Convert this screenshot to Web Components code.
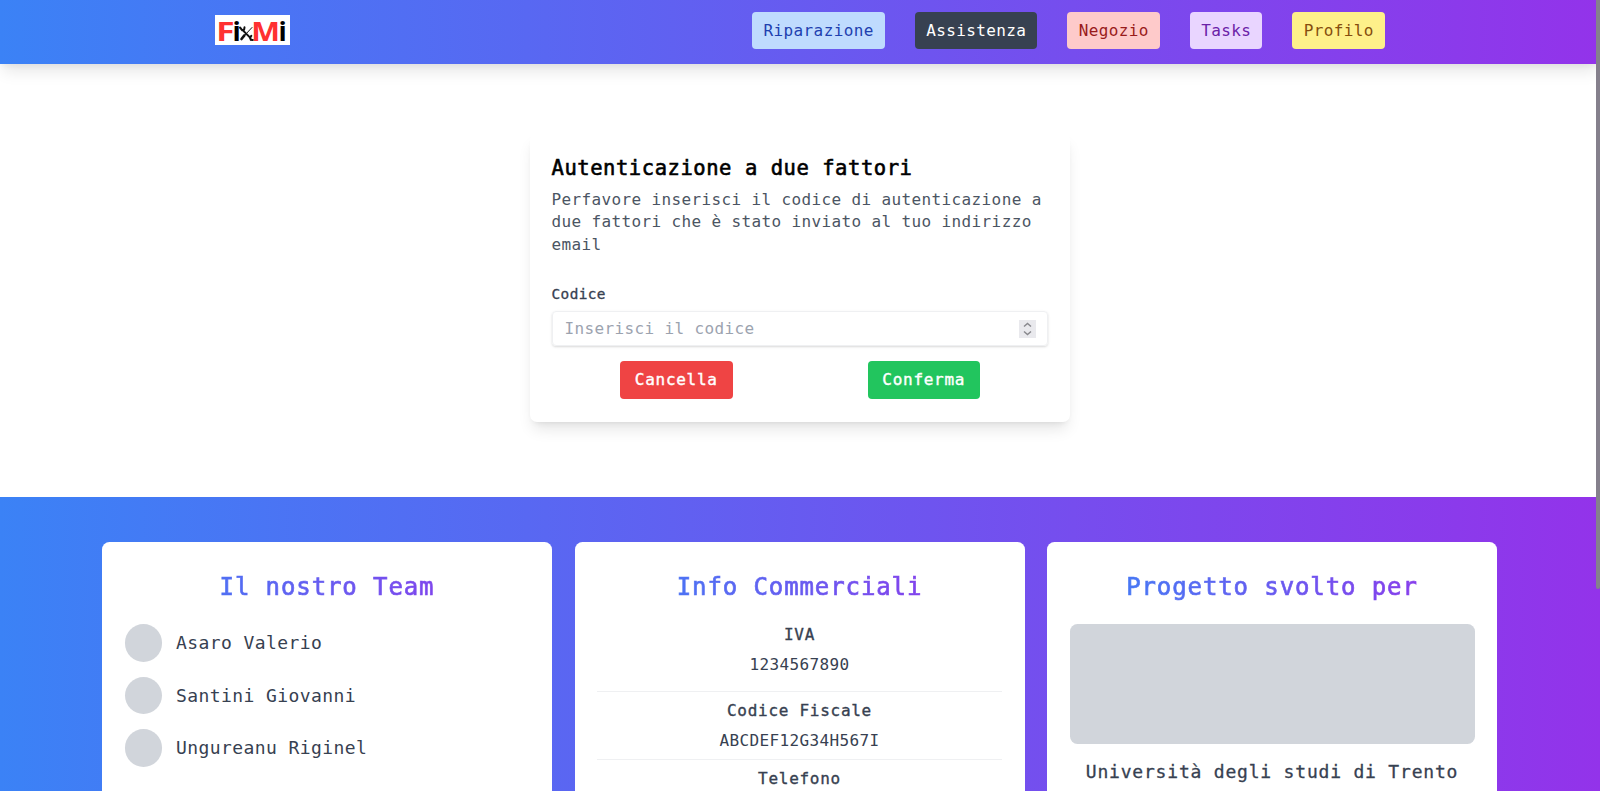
<!DOCTYPE html>
<html lang="it">
<head>
<meta charset="utf-8">
<title>FixMi</title>
<style>
html,body{margin:0;height:100%;overflow:hidden;background:#fff}
body{font:16px/22.5px "DejaVu Sans Mono","Liberation Mono",monospace;letter-spacing:.37px;color:#374151}
</style>
</head>
<body>
<fixmi-app></fixmi-app>
<script>
function define(name, markup) {
  const t = document.createElement('template');
  t.innerHTML = markup;
  customElements.define(name, class extends HTMLElement {
    constructor() {
      super();
      this.attachShadow({mode: 'open'}).append(t.content.cloneNode(true));
    }
  });
}
const GRADIENT = 'linear-gradient(to right,#3b82f6,#9333ea)';

define('fixmi-logo', `
<style>:host{display:block;width:74.5px;height:30px;background:#fff}svg{display:block;overflow:visible}text{font:700 27px "Open Sans","Noto Sans",sans-serif;letter-spacing:0}</style>
<svg width="74" height="30" viewBox="0 0 74 30">
  <g fill="#ff3131"><text x="1.2" y="26" textLength="18.3" lengthAdjust="spacingAndGlyphs">F</text><text x="36.2" y="26" textLength="28.8" lengthAdjust="spacingAndGlyphs">M</text></g>
  <text x="17.5" y="26">i</text><text x="63.6" y="26">i</text>
  <g stroke="#111" fill="none" stroke-linecap="round">
    <path stroke-width="1.8" d="M28 15.5L35.5 23"/><path stroke-width="2" d="M25 12.5l2.1 2.6 2-.5.4-2.3M36.3 20.8l-1.3 1.7.8 2.3 2 .2"/>
    <path stroke-width="1" d="M37 12.5L30 20"/><path stroke-width="2.6" d="M29.4 20.4L26.5 24"/>
  </g>
</svg>`);

define('nav-button', `
<style>:host{display:flex;align-items:center;height:37.5px;padding:1px 11.25px 0;border-radius:4px;box-sizing:border-box;background:var(--bg);color:var(--fg)}</style><slot></slot>`);

define('nav-bar', `
<style>
:host{display:flex;justify-content:space-between;align-items:center;height:64px;box-sizing:border-box;padding:0 215px;padding-bottom:3.5px;background:${GRADIENT};box-shadow:0 10px 15px -3px rgba(0,0,0,.1),0 4px 6px -2px rgba(0,0,0,.05);position:relative}
nav{display:flex;gap:30px}
</style>
<fixmi-logo></fixmi-logo>
<nav>
<nav-button style="--bg:#bfdbfe;--fg:#1e40af">Riparazione</nav-button>
<nav-button style="--bg:#374151;--fg:#fff">Assistenza</nav-button>
<nav-button style="--bg:#fecaca;--fg:#991b1b">Negozio</nav-button>
<nav-button style="--bg:#e9d5ff;--fg:#6b21a8">Tasks</nav-button>
<nav-button style="--bg:#fef08a;--fg:#854d0e">Profilo</nav-button>
</nav>`);

define('action-button', `
<style>:host{display:flex;align-items:center;justify-content:center;width:112.5px;height:37.5px;border-radius:4px;background:var(--bg);color:#fff;letter-spacing:.72px;-webkit-text-stroke:.4px currentColor}</style><slot></slot>`);

define('code-field', `
<style>
:host{display:flex;justify-content:space-between;align-items:center;height:35.5px;box-sizing:border-box;margin-left:-.5px;padding:1px 11px 0 11.5px;border:1px solid #eff0f2;border-radius:4px;box-shadow:0 1px 3px rgba(0,0,0,.1),0 1px 2px rgba(0,0,0,.06);color:#9ca3af}
svg{display:block;background:#e9e9ed}
</style>
<slot></slot>
<svg width="17" height="18" viewBox="0 0 17 18" fill="none" stroke="#88888d" stroke-width="1.4"><path d="M5 6.5L8.5 3.4 12 6.5M5 11.5l3.5 3.1 3.5-3.1"/></svg>`);

define('auth-card', `
<style>
:host{display:block;width:540px;box-sizing:border-box;margin:0 auto;padding:22.5px 22.5px 23px;border-radius:7px;background:#fff;box-shadow:0 10px 15px -3px rgba(0,0,0,.1),0 4px 6px -4px rgba(0,0,0,.1)}
h2{margin:0 0 7.8px -1px;font-size:20.5px;line-height:26px;font-weight:400;letter-spacing:.55px;color:#000;-webkit-text-stroke:.6px #000}
p{margin:0 -5px 29.2px -1px;color:#4b5563}
label{display:block;margin:0 0 6.5px -1px;font-size:14.4px;line-height:19px;letter-spacing:.4px;-webkit-text-stroke:.3px currentColor}
.row{display:grid;grid-template-columns:1fr 1fr;justify-items:center;margin-top:15px}
</style>
<h2>Autenticazione a due fattori</h2>
<p>Perfavore inserisci il codice di autenticazione a due fattori che è stato inviato al tuo indirizzo email</p>
<label>Codice</label>
<code-field>Inserisci il codice</code-field>
<div class="row"><action-button style="--bg:#ef4444">Cancella</action-button><action-button style="--bg:#22c55e">Conferma</action-button></div>`);

define('info-card', `
<style>
:host{display:block;box-sizing:border-box;height:330px;padding:30px 22.5px;border-radius:7.5px;background:#fff}
h3{margin:0 0 22.5px;font-size:24px;line-height:30px;font-weight:400;letter-spacing:.9px;text-align:center;color:transparent;background:${GRADIENT};-webkit-background-clip:text;background-clip:text;-webkit-text-stroke:.7px transparent}
</style>
<h3><slot name="title"></slot></h3><slot></slot>`);

define('team-member', `
<style>
:host{display:flex;align-items:center;gap:14px;margin-bottom:15px;font-size:18px;letter-spacing:.42px}
i{width:37.5px;height:37.5px;border-radius:50%;background:#d1d5db}
span{padding-top:1px}
</style><i></i><span><slot></slot></span>`);

define('info-entry', `
<style>
:host{display:block;text-align:center;padding:7.5px 0 7px;border-bottom:1px solid #eff0f2}
:host([first]){padding:0 0 14.5px}
b{display:block;margin-bottom:7.5px;font-weight:400;letter-spacing:.72px;-webkit-text-stroke:.35px currentColor}
span{display:block}
</style><b><slot name="label"></slot></b><span><slot></slot></span>`);

define('university-block', `
<style>
:host{display:block;text-align:center}
div{height:120px;border-radius:7.5px;background:#d1d5db}
p{margin:15px 0 0;font-size:18px;line-height:26.25px;letter-spacing:.8px;white-space:nowrap;-webkit-text-stroke:.3px currentColor}
</style><div></div><p><slot></slot></p>`);

define('page-footer', `
<style>
:host{display:grid;grid-template-columns:repeat(3,450px);justify-content:center;column-gap:22.5px;align-content:start;padding:44.6px 1px 0 0;height:249.4px;overflow:hidden;background:${GRADIENT}}
</style>
<info-card><span slot="title">Il nostro Team</span>
<team-member>Asaro Valerio</team-member><team-member>Santini Giovanni</team-member><team-member>Ungureanu Riginel</team-member></info-card>
<info-card><span slot="title">Info Commerciali</span>
<info-entry first><span slot="label">IVA</span>1234567890</info-entry>
<info-entry><span slot="label">Codice Fiscale</span>ABCDEF12G34H567I</info-entry>
<info-entry><span slot="label">Telefono</span></info-entry></info-card>
<info-card><span slot="title">Progetto svolto per</span>
<university-block>Università degli studi di Trento</university-block></info-card>`);

define('scroll-thumb', `
<style>:host{position:absolute;top:0;right:.5px;width:3.5px;height:589px;background:#85808c;border-radius:0 0 2px 2px}</style>`);

define('fixmi-app', `
<style>
:host{display:block;position:relative;height:791px;overflow:hidden}
main{height:433px;box-sizing:border-box;padding-top:68.5px}
</style>
<nav-bar></nav-bar><main><auth-card></auth-card></main><page-footer></page-footer><scroll-thumb></scroll-thumb>`);
</script>
</body>
</html>
